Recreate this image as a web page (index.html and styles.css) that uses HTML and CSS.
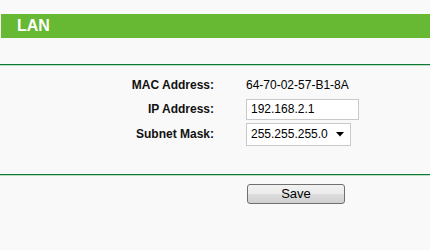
FILE: index.html
```html
<!DOCTYPE html>
<html>
<head>
<meta charset="utf-8">
<link rel="stylesheet" href="styles.css">
</head>
<body>
<div class="title">LAN</div>
<div class="rule rule-top"></div>
<div class="form">
  <div class="row row-mac">
    <div class="label">MAC Address:</div>
    <div class="value">64-70-02-57-B1-8A</div>
  </div>
  <div class="row row-ip">
    <div class="label">IP Address:</div>
    <div class="value"><div class="input">192.168.2.1</div></div>
  </div>
  <div class="row row-mask">
    <div class="label">Subnet Mask:</div>
    <div class="value"><div class="select"><span>255.255.255.0</span><svg width="8" height="5" viewBox="0 0 8 5"><path d="M0 0H8L4 4.5Z" fill="#000"/></svg></div></div>
  </div>
</div>
<div class="rule rule-bottom"></div>
<div class="actions"><div class="button">Save</div></div>
</body>
</html>
```
FILE: styles.css
```css
html, body {
  margin: 0;
  padding: 0;
  background: #f9f9f9;
  font-family: "Liberation Sans", Arial, sans-serif;
  font-size: 12px;
  color: #000;
}
.title {
  margin: 14px 0 0 1px;
  height: 24px;
  line-height: 24px;
  background: #67b934;
  color: #fff;
  font-weight: bold;
  font-size: 16px;
  padding-left: 16px;
}
.rule {
  height: 1px;
  background: #0d7a36;
  border-bottom: 1px solid #b9dcc3;
}
.rule-top {
  margin-top: 26px;
}
.form {
  display: flex;
  flex-direction: column;
  padding-top: 6px;
}
.row {
  display: grid;
  grid-template-columns: 214px 1fr;
  column-gap: 32px;
  align-items: center;
}
.row-mac { height: 25px; }
.row-ip { height: 24px; }
.row-mask { height: 26px; }
.label {
  text-align: right;
  font-weight: bold;
  color: #111;
}
.value {
  display: flex;
  align-items: center;
}
.input {
  box-sizing: border-box;
  width: 113px;
  height: 21px;
  border: 1px solid #c9c9c9;
  background: #fff;
  padding-left: 4px;
  line-height: 19px;
}
.select {
  box-sizing: border-box;
  width: 105px;
  height: 23px;
  border: 1px solid #c9c9c9;
  background: #fff;
  padding-left: 4px;
  padding-right: 6px;
  display: flex;
  align-items: center;
  justify-content: space-between;
}
.rule-bottom {
  margin-top: 27px;
}
.actions {
  padding: 8px 0 0 247px;
}
.button {
  box-sizing: border-box;
  width: 98px;
  height: 20px;
  border: 1px solid #707070;
  border-radius: 3px;
  background: linear-gradient(#f2f2f2 0%, #ebebeb 48%, #dddddd 52%, #cfcfcf 100%);
  text-align: center;
  line-height: 18px;
  font-size: 13px;
}
```
